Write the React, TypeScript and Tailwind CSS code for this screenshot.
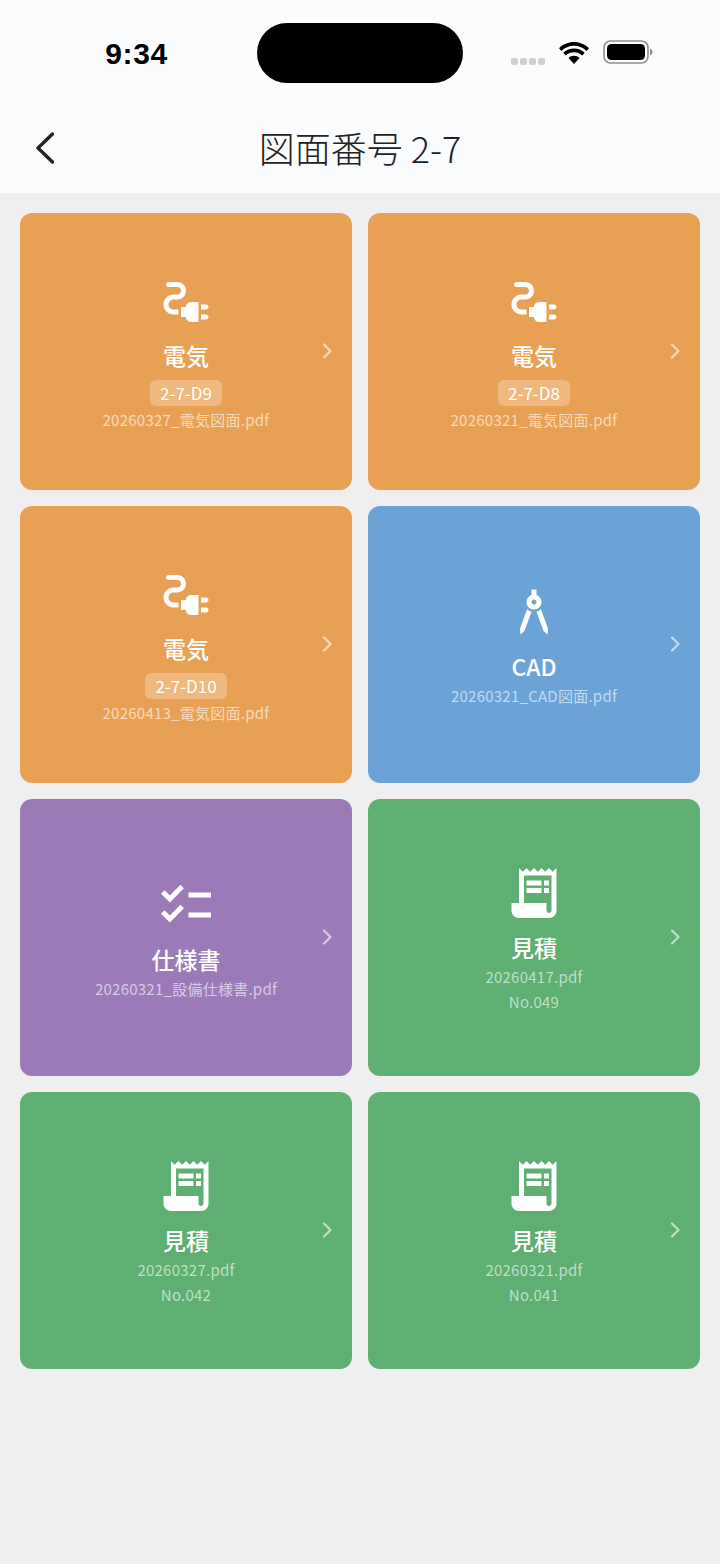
import React from "react";
import { MdElectricalServices, MdArchitecture, MdChecklist, MdReceiptLong } from "react-icons/md";

const cjk = { fontFamily: '"Noto Sans CJK JP", "Noto Sans", sans-serif' };

type Kind = "elec" | "cad" | "spec" | "quote";

const styles: Record<Kind, { bg: string; sub: string; chev: string; Icon: React.ComponentType<{ className?: string }>; title: string }> = {
  elec: { bg: "bg-[#e8a154]", sub: "text-[#f6d9ba]", chev: "text-[#f6d9ba]", Icon: MdElectricalServices, title: "電気" },
  cad: { bg: "bg-[#6ca3d7]", sub: "text-[#c4daef]", chev: "text-[#c4daef]", Icon: MdArchitecture, title: "CAD" },
  spec: { bg: "bg-[#9c7ab7]", sub: "text-[#d7cae2]", chev: "text-[#d7cae2]", Icon: MdChecklist, title: "仕様書" },
  quote: { bg: "bg-[#5fae72]", sub: "text-[#bfdfc7]", chev: "text-[#bfdfc7]", Icon: MdReceiptLong, title: "見積" },
};

const cards: { kind: Kind; badge?: string; file: string; no?: string }[] = [
  { kind: "elec", badge: "2-7-D9", file: "20260327_電気図面.pdf" },
  { kind: "elec", badge: "2-7-D8", file: "20260321_電気図面.pdf" },
  { kind: "elec", badge: "2-7-D10", file: "20260413_電気図面.pdf" },
  { kind: "cad", file: "20260321_CAD図面.pdf" },
  { kind: "spec", file: "20260321_設備仕様書.pdf" },
  { kind: "quote", file: "20260417.pdf", no: "No.049" },
  { kind: "quote", file: "20260327.pdf", no: "No.042" },
  { kind: "quote", file: "20260321.pdf", no: "No.041" },
];

function Card({ kind, badge, file, no }: { kind: Kind; badge?: string; file: string; no?: string }) {
  const s = styles[kind];
  const Icon = s.Icon;
  return (
    <div className={`relative h-[277px] rounded-xl ${s.bg} flex flex-col items-center justify-center text-white ${no ? "pt-[2px]" : ""}`}>
      <Icon className="w-[60px] h-[60px]" />
      <div className={`text-[23px] leading-[34px] font-medium ${badge ? "mt-[6px]" : "mt-[7px]"}`}>{s.title}</div>
      {badge && (
        <div className="mt-[8px] h-[26px] px-[10px] rounded-md bg-white/25 text-[17px] leading-[26px]">{badge}</div>
      )}
      <div className={`text-[15px] leading-[25px] tracking-[0.25px] ${s.sub} ${badge ? "mt-[1px]" : ""}`}>{file}</div>
      {no && <div className={`text-[15px] leading-[25px] tracking-[0.25px] ${s.sub}`}>{no}</div>}
      <svg viewBox="0 0 10 16" className={`absolute right-[20px] top-[130px] w-[10px] h-[16px] ${s.chev}`} fill="none" stroke="currentColor" strokeWidth="2.2" strokeLinecap="round" strokeLinejoin="round">
        <path d="M2 1.5 8.5 8 2 14.5" />
      </svg>
    </div>
  );
}

export default function App() {
  return (
    <div className="w-[720px] h-[1564px] bg-[#efefef] flex flex-col" style={cjk}>
      <header className="h-[193px] bg-[#fbfcfe] flex flex-col shrink-0">
        <div className="h-[106px] pt-[23px] flex items-start">
          <div className="w-[257px] h-[60px] flex items-center justify-center pl-[16px] text-[30px] tracking-[0.6px] font-bold text-black" style={{ fontFamily: '"Liberation Sans", sans-serif' }}>9:34</div>
          <div className="w-[206px] h-[60px] rounded-[30px] bg-black" />
          <div className="h-[60px] flex items-center pl-[48px] gap-[12px]">
            <div className="flex gap-[2px] mt-[16px]">
              {[0, 1, 2, 3].map((i) => (
                <span key={i} className="w-[7px] h-[7px] rounded-[2px] bg-[#cfcfcf]" />
              ))}
            </div>
            <svg viewBox="0 0 32 24" className="w-[34px] h-[25px] -mt-[1px]" fill="black">
              <path d="M16 5.6c4.7 0 9 1.9 12.1 4.9l2.3-2.6C26.6 4.2 21.5 2 16 2S5.4 4.2 1.6 7.9l2.3 2.6C7 7.5 11.3 5.6 16 5.6Z" />
              <path d="M16 11.8c3 0 5.8 1.2 7.9 3.1l2.4-2.7c-2.7-2.5-6.4-4-10.3-4s-7.6 1.5-10.3 4l2.4 2.7c2.1-1.9 4.9-3.1 7.9-3.1Z" />
              <path d="M16 15.2c-2 0-3.9.8-5.3 2L16 23l5.3-5.8c-1.4-1.2-3.3-2-5.3-2Z" />
            </svg>
            <svg viewBox="0 0 50 24" className="w-[50px] h-[24px] -mt-[2px]">
              <rect x="1" y="1" width="44" height="22" rx="6.5" fill="none" stroke="#8e8e8e" strokeWidth="1.6" />
              <rect x="4" y="4" width="38" height="16" rx="4.5" fill="black" />
              <path d="M47 8.5c1.5.5 2.5 2 2.5 3.5s-1 3-2.5 3.5Z" fill="#8e8e8e" />
            </svg>
          </div>
        </div>
        <div className="relative flex items-center justify-center h-[84px]">
          <svg viewBox="0 0 18 32" className="absolute left-[36px] top-[26px] w-[18px] h-[32px] text-[#222222]" fill="none" stroke="currentColor" strokeWidth="3.4" strokeLinecap="round" strokeLinejoin="round">
            <path d="M16.5 2 2 16 16.5 30" />
          </svg>
          <h1 className="text-[36px] leading-[48px] font-light text-[#222222] pb-[2px]">図面番号 2-7</h1>
        </div>
      </header>
      <main className="px-[20px] pt-[20px] grid grid-cols-2 gap-x-[16px] gap-y-[16px]">
        {cards.map((c, i) => (
          <Card key={i} {...c} />
        ))}
      </main>
    </div>
  );
}
